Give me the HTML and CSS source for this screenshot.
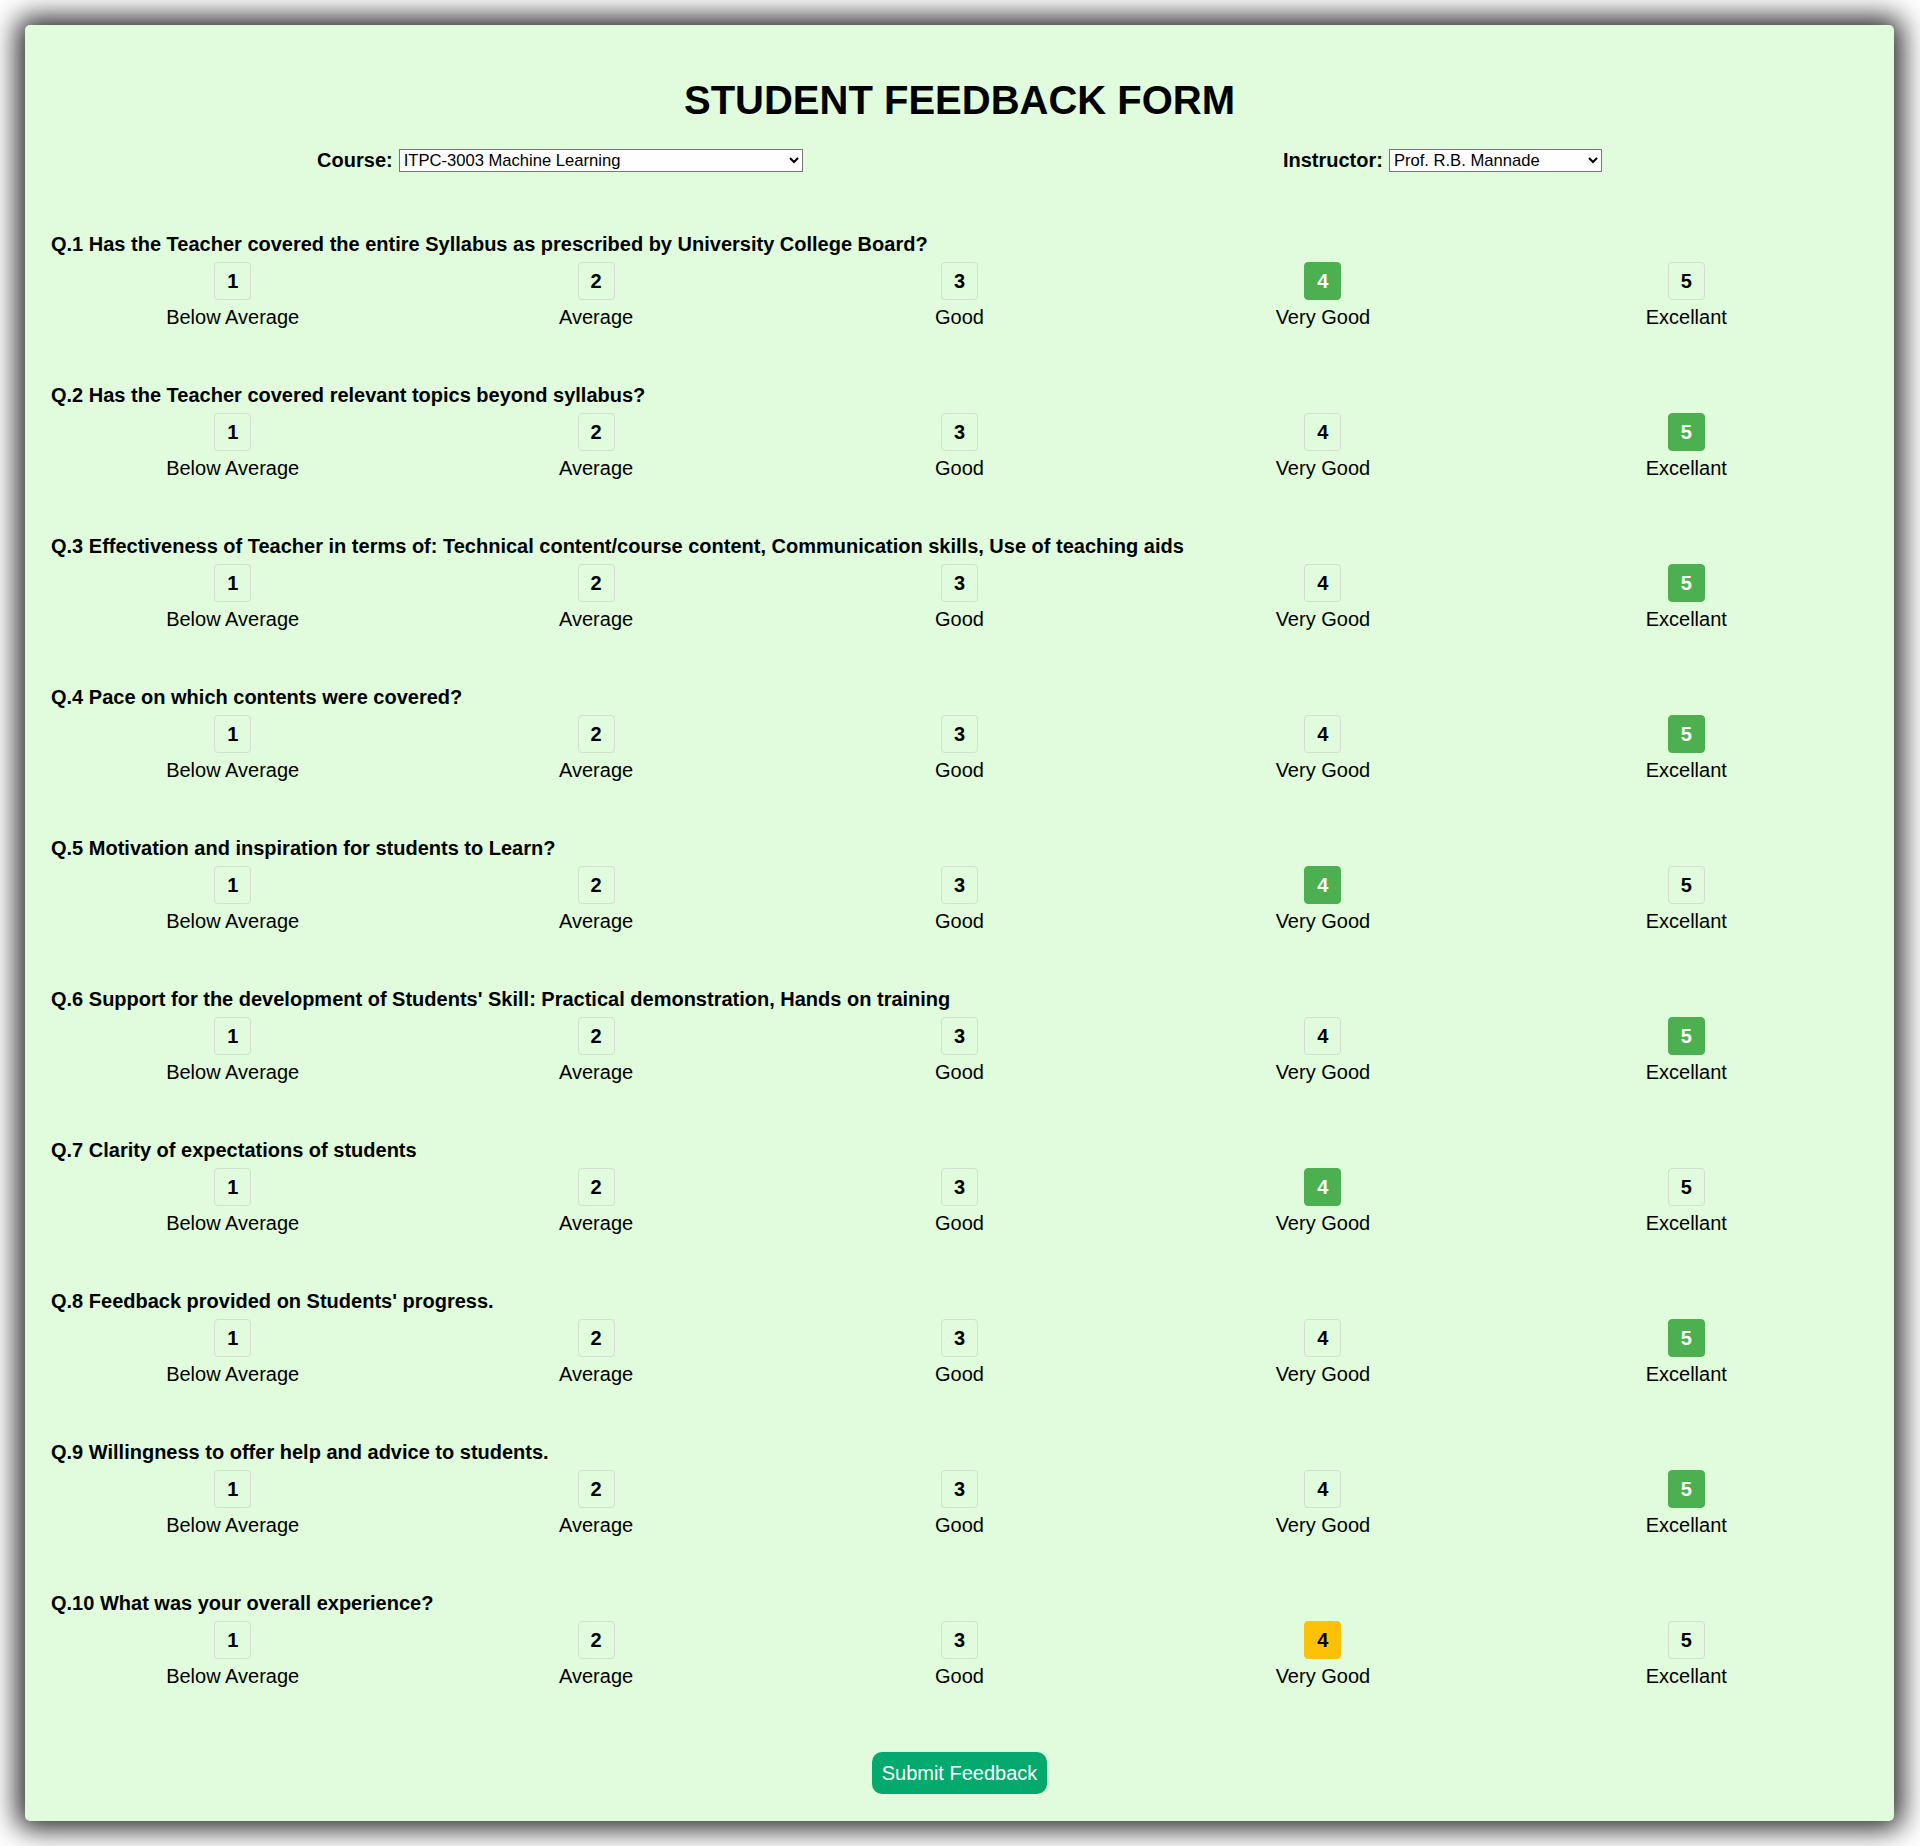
FILE: index.html
```html
<!DOCTYPE html>
<html lang="en">
<head>
<meta charset="utf-8">
<title>Student Feedback Form</title>
<link rel="stylesheet" href="styles.css">
</head>
<body>
<div class="card">
  <h1 class="title">STUDENT FEEDBACK FORM</h1>
  <div class="meta-row">
    <div class="meta-group">
      <label class="meta-label" for="course">Course:</label>
      <select id="course" class="meta-select course-select">
        <option>ITPC-3003 Machine Learning</option>
      </select>
    </div>
    <div class="meta-group">
      <label class="meta-label" for="instructor">Instructor:</label>
      <select id="instructor" class="meta-select instructor-select">
        <option>Prof. R.B. Mannade</option>
      </select>
    </div>
  </div>

  <div class="question">
    <p class="q-text">Q.1 Has the Teacher covered the entire Syllabus as prescribed by University College Board?</p>
    <div class="options">
      <div class="option"><span class="num">1</span><span class="opt-label">Below Average</span></div>
      <div class="option"><span class="num">2</span><span class="opt-label">Average</span></div>
      <div class="option"><span class="num">3</span><span class="opt-label">Good</span></div>
      <div class="option"><span class="num selected">4</span><span class="opt-label">Very Good</span></div>
      <div class="option"><span class="num">5</span><span class="opt-label">Excellant</span></div>
    </div>
  </div>

  <div class="question">
    <p class="q-text">Q.2 Has the Teacher covered relevant topics beyond syllabus?</p>
    <div class="options">
      <div class="option"><span class="num">1</span><span class="opt-label">Below Average</span></div>
      <div class="option"><span class="num">2</span><span class="opt-label">Average</span></div>
      <div class="option"><span class="num">3</span><span class="opt-label">Good</span></div>
      <div class="option"><span class="num">4</span><span class="opt-label">Very Good</span></div>
      <div class="option"><span class="num selected">5</span><span class="opt-label">Excellant</span></div>
    </div>
  </div>

  <div class="question">
    <p class="q-text">Q.3 Effectiveness of Teacher in terms of: Technical content/course content, Communication skills, Use of teaching aids</p>
    <div class="options">
      <div class="option"><span class="num">1</span><span class="opt-label">Below Average</span></div>
      <div class="option"><span class="num">2</span><span class="opt-label">Average</span></div>
      <div class="option"><span class="num">3</span><span class="opt-label">Good</span></div>
      <div class="option"><span class="num">4</span><span class="opt-label">Very Good</span></div>
      <div class="option"><span class="num selected">5</span><span class="opt-label">Excellant</span></div>
    </div>
  </div>

  <div class="question">
    <p class="q-text">Q.4 Pace on which contents were covered?</p>
    <div class="options">
      <div class="option"><span class="num">1</span><span class="opt-label">Below Average</span></div>
      <div class="option"><span class="num">2</span><span class="opt-label">Average</span></div>
      <div class="option"><span class="num">3</span><span class="opt-label">Good</span></div>
      <div class="option"><span class="num">4</span><span class="opt-label">Very Good</span></div>
      <div class="option"><span class="num selected">5</span><span class="opt-label">Excellant</span></div>
    </div>
  </div>

  <div class="question">
    <p class="q-text">Q.5 Motivation and inspiration for students to Learn?</p>
    <div class="options">
      <div class="option"><span class="num">1</span><span class="opt-label">Below Average</span></div>
      <div class="option"><span class="num">2</span><span class="opt-label">Average</span></div>
      <div class="option"><span class="num">3</span><span class="opt-label">Good</span></div>
      <div class="option"><span class="num selected">4</span><span class="opt-label">Very Good</span></div>
      <div class="option"><span class="num">5</span><span class="opt-label">Excellant</span></div>
    </div>
  </div>

  <div class="question">
    <p class="q-text">Q.6 Support for the development of Students' Skill: Practical demonstration, Hands on training</p>
    <div class="options">
      <div class="option"><span class="num">1</span><span class="opt-label">Below Average</span></div>
      <div class="option"><span class="num">2</span><span class="opt-label">Average</span></div>
      <div class="option"><span class="num">3</span><span class="opt-label">Good</span></div>
      <div class="option"><span class="num">4</span><span class="opt-label">Very Good</span></div>
      <div class="option"><span class="num selected">5</span><span class="opt-label">Excellant</span></div>
    </div>
  </div>

  <div class="question">
    <p class="q-text">Q.7 Clarity of expectations of students</p>
    <div class="options">
      <div class="option"><span class="num">1</span><span class="opt-label">Below Average</span></div>
      <div class="option"><span class="num">2</span><span class="opt-label">Average</span></div>
      <div class="option"><span class="num">3</span><span class="opt-label">Good</span></div>
      <div class="option"><span class="num selected">4</span><span class="opt-label">Very Good</span></div>
      <div class="option"><span class="num">5</span><span class="opt-label">Excellant</span></div>
    </div>
  </div>

  <div class="question">
    <p class="q-text">Q.8 Feedback provided on Students' progress.</p>
    <div class="options">
      <div class="option"><span class="num">1</span><span class="opt-label">Below Average</span></div>
      <div class="option"><span class="num">2</span><span class="opt-label">Average</span></div>
      <div class="option"><span class="num">3</span><span class="opt-label">Good</span></div>
      <div class="option"><span class="num">4</span><span class="opt-label">Very Good</span></div>
      <div class="option"><span class="num selected">5</span><span class="opt-label">Excellant</span></div>
    </div>
  </div>

  <div class="question">
    <p class="q-text">Q.9 Willingness to offer help and advice to students.</p>
    <div class="options">
      <div class="option"><span class="num">1</span><span class="opt-label">Below Average</span></div>
      <div class="option"><span class="num">2</span><span class="opt-label">Average</span></div>
      <div class="option"><span class="num">3</span><span class="opt-label">Good</span></div>
      <div class="option"><span class="num">4</span><span class="opt-label">Very Good</span></div>
      <div class="option"><span class="num selected">5</span><span class="opt-label">Excellant</span></div>
    </div>
  </div>

  <div class="question">
    <p class="q-text">Q.10 What was your overall experience?</p>
    <div class="options">
      <div class="option"><span class="num">1</span><span class="opt-label">Below Average</span></div>
      <div class="option"><span class="num">2</span><span class="opt-label">Average</span></div>
      <div class="option"><span class="num">3</span><span class="opt-label">Good</span></div>
      <div class="option"><span class="num overall">4</span><span class="opt-label">Very Good</span></div>
      <div class="option"><span class="num">5</span><span class="opt-label">Excellant</span></div>
    </div>
  </div>

  <div class="submit-wrap">
    <button class="submit-btn" type="button">Submit Feedback</button>
  </div>
</div>
</body>
</html>
```

FILE: styles.css
```css
html, body {
  margin: 0;
  padding: 0;
  background: #ffffff;
}

body {
  font-family: "Liberation Sans", Arial, sans-serif;
  color: #000;
  padding: 25px 26px 26px 25px;
}

.card {
  background: #e0fcdc;
  border-radius: 5px;
  box-shadow: 0 0 28px 8px rgba(0, 0, 0, 0.85);
  padding: 26px 26px 27px 26px;
}

.title {
  margin: 26px 0 26px;
  font-size: 40px;
  line-height: 46px;
  font-weight: bold;
  text-align: center;
}

.meta-row {
  display: flex;
  justify-content: space-around;
  align-items: center;
  height: 23px;
  padding: 0 26px;
  margin-bottom: 61px;
}

.meta-group {
  display: flex;
  align-items: center;
  gap: 6px;
}

.meta-label {
  font-size: 20px;
  font-weight: bold;
  line-height: 23px;
}

.meta-select {
  font-family: "Liberation Sans", Arial, sans-serif;
  font-size: 16.6px;
  height: 23px;
  background: #fff;
  color: #000;
}

.course-select {
  width: 404px;
}

.instructor-select {
  width: 213px;
}

.question {
  margin-bottom: 55px;
}

.q-text {
  margin: 0 0 6px;
  font-size: 20px;
  font-weight: bold;
  line-height: 23px;
}

.options {
  display: grid;
  grid-template-columns: repeat(5, 1fr);
}

.option {
  display: flex;
  flex-direction: column;
  align-items: center;
  gap: 6px;
}

.num {
  display: block;
  padding: 7px 12px;
  line-height: 22px;
  font-size: 20px;
  font-weight: bold;
  border: 1px solid #d6ded4;
  border-radius: 4px;
  text-align: center;
}

.num.selected {
  background: #4caf50;
  border-color: #4caf50;
  color: #fff;
}

.num.overall {
  background: #ffc107;
  border-color: #ffc107;
  color: #000;
}

.opt-label {
  font-size: 20px;
  line-height: 23px;
}

.submit-wrap {
  display: flex;
  justify-content: center;
  margin-top: 64px;
}

.submit-btn {
  font-family: "Liberation Sans", Arial, sans-serif;
  font-size: 20px;
  line-height: 22px;
  padding: 10px 10px;
  border: none;
  border-radius: 10px;
  background: #04a96d;
  color: #fff;
}
```
